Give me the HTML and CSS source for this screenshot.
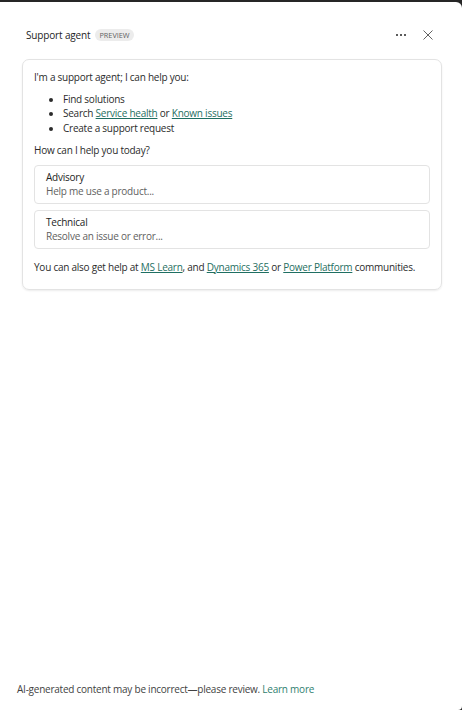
FILE: index.html
```html
<!DOCTYPE html>
<html>
<head>
<meta charset="utf-8">
<link rel="stylesheet" href="styles.css">
</head>
<body>
<div class="panel">
  <header class="header">
    <div class="title-wrap">
      <span class="title">Support agent</span>
      <span class="badge">PREVIEW</span>
    </div>
    <div class="actions">
      <svg class="icon" width="12" height="12" viewBox="0 0 12 12"><circle cx="2" cy="6" r="1" fill="#242424"/><circle cx="6" cy="6" r="1" fill="#242424"/><circle cx="10" cy="6" r="1" fill="#242424"/></svg>
      <svg class="icon" width="12" height="12" viewBox="0 0 12 12"><path d="M1.5 1.5 L10.5 10.5 M10.5 1.5 L1.5 10.5" stroke="#616161" stroke-width="1" fill="none"/></svg>
    </div>
  </header>
  <main class="content">
    <section class="card">
      <p class="intro">I'm a support agent; I can help you:</p>
      <ul class="list">
        <li>Find solutions</li>
        <li>Search <a href="#">Service health</a> or <a href="#">Known issues</a></li>
        <li>Create a support request</li>
      </ul>
      <p class="question">How can I help you today?</p>
      <div class="option">
        <div class="opt-title">Advisory</div>
        <div class="opt-sub">Help me use a product...</div>
      </div>
      <div class="option">
        <div class="opt-title">Technical</div>
        <div class="opt-sub">Resolve an issue or error...</div>
      </div>
      <p class="more">You can also get help at <a href="#">MS Learn</a>, and <a href="#">Dynamics 365</a> or <a href="#">Power Platform</a> communities.</p>
    </section>
  </main>
  <footer class="footer">AI-generated content may be incorrect—please review. <a href="#" class="learn">Learn more</a></footer>
</div>
</body>
</html>
```
FILE: styles.css
```css
html, body {
  margin: 0;
  padding: 0;
  height: 100%;
}
body {
  background: #262626;
  font-family: "Open Sans", "Liberation Sans", sans-serif;
  font-size: 10px;
  letter-spacing: -0.24px;
  color: #2b2b2b;
}
.panel {
  box-sizing: border-box;
  height: calc(100% - 2px);
  margin-top: 2px;
  background: #fff;
  border-top-right-radius: 6px;
  border-bottom-right-radius: 4px;
  display: flex;
  flex-direction: column;
}
.header {
  display: flex;
  align-items: center;
  justify-content: space-between;
  padding: 27px 28px 0 26px;
  height: 12px;
}
.title-wrap {
  display: flex;
  align-items: center;
  gap: 5px;
}
.title {
  font-size: 10px;
  letter-spacing: -0.15px;
  color: #242424;
}
.badge {
  font-size: 7.3px;
  letter-spacing: 0;
  color: #616161;
  background: #ececec;
  border-radius: 6px;
  padding: 1px 4px;
  line-height: 10px;
}
.actions {
  display: flex;
  align-items: center;
  gap: 15px;
}
.icon { display: block; }
.content {
  flex: 1;
  padding: 18px 20px 0 22px;
}
.card {
  border: 1px solid #e3e3e3;
  border-radius: 7px;
  box-shadow: 0 1px 2px rgba(0,0,0,0.08);
  padding: 10px 11px 15px 11px;
  line-height: 14.5px;
}
.card p { margin: 0; }
.intro { margin-bottom: 7px !important; }
.list {
  margin: 0;
  padding-left: 29px;
}
.question { margin-top: 8px !important; margin-bottom: 7px !important; }
a {
  color: #1f6f62;
  text-decoration: underline;
  text-underline-offset: 1px;
}
.option {
  border: 1px solid #e3e3e3;
  border-radius: 4px;
  padding: 4px 11px 5px 11px;
  margin-bottom: 6px;
  line-height: 14px;
}
.opt-title { color: #242424; }
.opt-sub { color: #616161; }
.more { margin-top: 11px !important; }
.footer {
  padding: 0 17px 14px 17px;
  font-size: 10px;
  color: #424242;
}
.footer .learn {
  color: #2f8070;
  text-decoration: none;
}
```
